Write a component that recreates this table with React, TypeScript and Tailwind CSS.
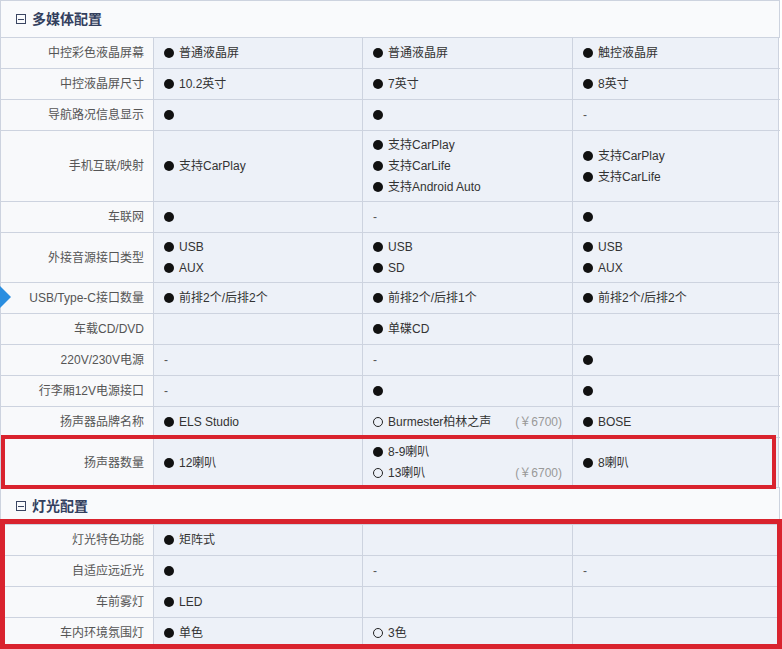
import React from 'react'

type Item = { mark: 'on' | 'off'; text: string; price?: string }
type Cell = Item[] | '-' | null
type Row = { label: string; h: string; cells: Cell[] }

const on = (text: string): Item => ({ mark: 'on', text })
const off = (text: string, price?: string): Item => ({ mark: 'off', text, price })

const media: Row[] = [
  { label: '中控彩色液晶屏幕', h: 'h-[31px]', cells: [[on('普通液晶屏')], [on('普通液晶屏')], [on('触控液晶屏')]] },
  { label: '中控液晶屏尺寸', h: 'h-[31px]', cells: [[on('10.2英寸')], [on('7英寸')], [on('8英寸')]] },
  { label: '导航路况信息显示', h: 'h-[31px]', cells: [[on('')], [on('')], '-'] },
  {
    label: '手机互联/映射',
    h: 'h-[71px]',
    cells: [
      [on('支持CarPlay')],
      [on('支持CarPlay'), on('支持CarLife'), on('支持Android Auto')],
      [on('支持CarPlay'), on('支持CarLife')],
    ],
  },
  { label: '车联网', h: 'h-[31px]', cells: [[on('')], '-', [on('')]] },
  { label: '外接音源接口类型', h: 'h-[50px]', cells: [[on('USB'), on('AUX')], [on('USB'), on('SD')], [on('USB'), on('AUX')]] },
  { label: 'USB/Type-C接口数量', h: 'h-[31px]', cells: [[on('前排2个/后排2个')], [on('前排2个/后排1个')], [on('前排2个/后排2个')]] },
  { label: '车载CD/DVD', h: 'h-[31px]', cells: [null, [on('单碟CD')], null] },
  { label: '220V/230V电源', h: 'h-[31px]', cells: ['-', '-', [on('')]] },
  { label: '行李厢12V电源接口', h: 'h-[31px]', cells: ['-', [on('')], [on('')]] },
  { label: '扬声器品牌名称', h: 'h-[31px]', cells: [[on('ELS Studio')], [off('Burmester柏林之声', '(￥6700)')], [on('BOSE')]] },
  { label: '扬声器数量', h: 'h-[50px]', cells: [[on('12喇叭')], [on('8-9喇叭'), off('13喇叭', '(￥6700)')], [on('8喇叭')]] },
]

const lights: Row[] = [
  { label: '灯光特色功能', h: 'h-[31px]', cells: [[on('矩阵式')], null, null] },
  { label: '自适应远近光', h: 'h-[31px]', cells: [[on('')], '-', '-'] },
  { label: '车前雾灯', h: 'h-[31px]', cells: [[on('LED')], null, null] },
  { label: '车内环境氛围灯', h: 'h-[31px]', cells: [[on('单色')], [off('3色')], null] },
]

const colW = ['w-[209px]', 'w-[210px]', 'w-[207px] border-r']

function Mark({ type }: { type: 'on' | 'off' }) {
  return type === 'on' ? (
    <span className="inline-block h-[10px] w-[10px] shrink-0 rounded-full bg-[#111]" />
  ) : (
    <span className="inline-block h-[10px] w-[10px] shrink-0 rounded-full border-[1.5px] border-[#222]" />
  )
}

function ValueCell({ cell, w }: { cell: Cell; w: string }) {
  return (
    <div className={`flex flex-col justify-center border-l border-[#cdd3df] bg-[#edf1f8] px-[10px] text-[#333] ${w}`}>
      {cell === '-' && <span className="leading-[21px] text-[#555]">-</span>}
      {Array.isArray(cell) &&
        cell.map((item, i) => (
          <div key={i} className="flex h-[21px] items-center gap-[5px]">
            <Mark type={item.mark} />
            <span>{item.text}</span>
            {item.price && <span className="ml-auto text-[#999]">{item.price}</span>}
          </div>
        ))}
    </div>
  )
}

function Header({ title }: { title: string }) {
  return (
    <div className="flex h-[37px] w-[780px] items-center gap-[6px] border-x border-t border-[#cdd3df] bg-[#f9fafc] pl-[15px]">
      <span className="relative inline-block h-[10px] w-[10px] border border-[#3a4562]">
        <span className="absolute left-[1px] right-[1px] top-[3.5px] h-px bg-[#3a4562]" />
      </span>
      <span className="text-[14px] font-bold text-[#333f5e]">{title}</span>
    </div>
  )
}

function Rows({ rows }: { rows: Row[] }) {
  return (
    <>
      {rows.map((row) => (
        <div key={row.label} className={`flex w-[780px] border-t border-[#cdd3df] ${row.h}`}>
          <div className="flex w-[153px] items-center justify-end border-l border-[#cdd3df] bg-[#f8f9fb] pr-[9px] text-[#555]">
            {row.label}
          </div>
          {row.cells.map((cell, i) => (
            <ValueCell key={i} cell={cell} w={colW[i]} />
          ))}
        </div>
      ))}
    </>
  )
}

export default function App() {
  return (
    <div className="relative h-[649px] w-[782px] overflow-hidden bg-white font-['Liberation_Sans','Noto_Sans_CJK_SC',sans-serif] text-[12px]">
      <Header title="多媒体配置" />
      <Rows rows={media} />
      <Header title="灯光配置" />
      <Rows rows={lights} />

      <svg className="absolute left-0 top-[286px]" width="12" height="22" viewBox="0 0 12 22">
        <polygon points="0,0 11,11 0,22" fill="#2a8ee0" />
      </svg>

      <div className="pointer-events-none absolute left-[1px] top-[435px] h-[54px] w-[775px] border-[4px] border-[#d9232e]" />
      <div className="pointer-events-none absolute left-0 top-[519px] h-[130px] w-[782px] border-[5px] border-[#d9232e]" />
    </div>
  )
}
